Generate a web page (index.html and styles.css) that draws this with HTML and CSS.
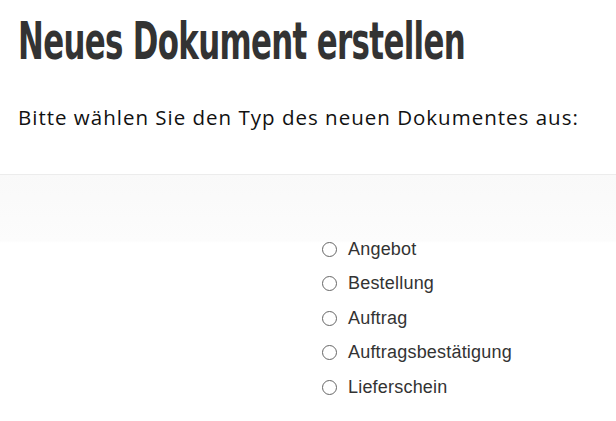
FILE: index.html
```html
<!DOCTYPE html>
<html lang="de">
<head>
  <meta charset="UTF-8">
  <meta name="viewport" content="width=device-width, initial-scale=1.0">
  <title>Neues Dokument erstellen</title>
  <link rel="stylesheet" href="styles.css">
</head>
<body>
  <div class="header">
    <h1>Neues Dokument erstellen</h1>
    <p class="intro">Bitte wählen Sie den Typ des neuen Dokumentes aus:</p>
  </div>

  <div class="panel">
    <div></div>
    <ul class="type-list">
      <li><label><input type="radio" name="docType" value="angebot"> Angebot</label></li>
      <li><label><input type="radio" name="docType" value="bestellung"> Bestellung</label></li>
      <li><label><input type="radio" name="docType" value="auftrag"> Auftrag</label></li>
      <li><label><input type="radio" name="docType" value="ab"> Auftragsbestätigung</label></li>
      <li><label><input type="radio" name="docType" value="lieferschein"> Lieferschein</label></li>
    </ul>
  </div>
</body>
</html>
```

FILE: styles.css
```css
body {
  margin: 0;
  background: #fff;
  font-family: 'Liberation Sans', Arial, sans-serif;
}
.header {
  padding: 14px 18px 0;
  height: 174px;
  box-sizing: border-box;
  overflow: hidden;
}
h1 {
  margin: 0;
  width: 700px;
  font-family: 'DejaVu Sans', sans-serif;
  font-stretch: condensed;
  font-weight: bold;
  font-size: 51px;
  line-height: 56px;
  letter-spacing: -1px;
  color: #333;
  white-space: nowrap;
  transform: scaleX(0.673);
  transform-origin: left;
}
.intro {
  margin: 33px 0 0;
  font-family: 'Open Sans', sans-serif;
  font-size: 20.5px;
  letter-spacing: 1px;
  color: #111;
}
.panel {
  border-top: 1px solid #ececec;
  background: linear-gradient(#f9f9f9, #fcfcfc 66px, #fff 68px);
  padding-top: 57px;
  display: grid;
  grid-template-columns: 1fr 1fr;
}
.type-list {
  list-style: none;
  margin: 0;
  padding: 0 0 0 14px;
}
.type-list li {
  height: 34.5px;
  display: flex;
  align-items: center;
}
.type-list label {
  display: flex;
  align-items: center;
  font-size: 18px;
  letter-spacing: 0.2px;
  color: #333;
}
.type-list input {
  appearance: none;
  width: 15px;
  height: 15px;
  margin: 0 11px 0 0;
  border: 1px solid #666;
  border-radius: 50%;
}
```
